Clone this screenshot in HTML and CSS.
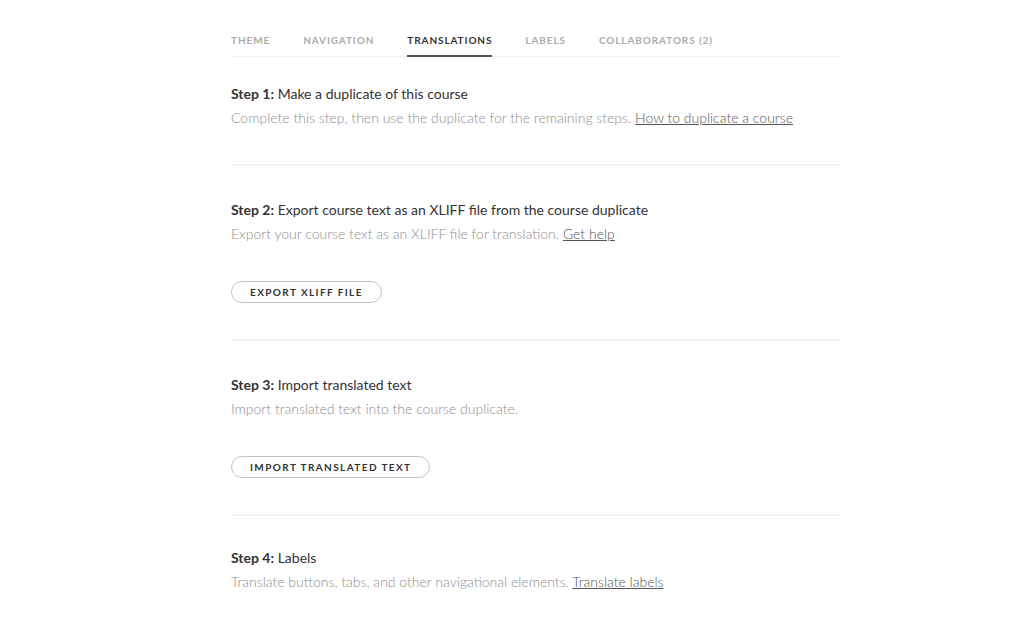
FILE: index.html
```html
<!DOCTYPE html>
<html>
<head>
    <meta charset="utf-8">
    <title>Translations</title>
    <link rel="stylesheet" href="styles.css">
</head>
<body>
    <div class="page">
        <nav class="tabs">
            <a class="tab">Theme</a>
            <a class="tab">Navigation</a>
            <a class="tab active">Translations</a>
            <a class="tab">Labels</a>
            <a class="tab">Collaborators (2)</a>
        </nav>

        <div class="step first">
            <h3><b>Step 1:</b> Make a duplicate of this course</h3>
            <p>Complete this step, then use the duplicate for the remaining steps. <a href="#">How to duplicate a course</a></p>
        </div>

        <div class="step">
            <h3><b>Step 2:</b> Export course text as an XLIFF file from the course duplicate</h3>
            <p>Export your course text as an XLIFF file for translation. <a href="#">Get help</a></p>
            <button>Export XLIFF file</button>
        </div>

        <div class="step">
            <h3><b>Step 3:</b> Import translated text</h3>
            <p>Import translated text into the course duplicate.</p>
            <button>Import translated text</button>
        </div>

        <div class="step last">
            <h3><b>Step 4:</b> Labels</h3>
            <p>Translate buttons, tabs, and other navigational elements. <a href="#">Translate labels</a></p>
        </div>
    </div>
</body>
</html>
```

FILE: styles.css
```css
body {
    margin: 0;
    background: #fff;
    font-family: Lato, "Open Sans", sans-serif;
    color: #333;
}
.page {
    width: 609px;
    margin-left: 231px;
}
.tabs {
    display: flex;
    gap: 33px;
    padding-top: 33px;
    border-bottom: 1px solid #f0f0f0;
}
.tab {
    font-size: 10px;
    font-weight: 700;
    line-height: 14px;
    letter-spacing: 0.9px;
    text-transform: uppercase;
    color: #ababab;
    padding-bottom: 8px;
    border-bottom: 2px solid transparent;
    margin-bottom: -1px;
}
.tab.active {
    color: #333;
    border-bottom-color: #555;
}
.step {
    padding: 34px 0 36px;
    border-bottom: 2px solid #f4f4f4;
}
.step.first {
    padding-top: 27px;
}
.step.last {
    padding-top: 32px;
    border-bottom: none;
}
.step h3 {
    margin: 0 0 4px;
    font-size: 14px;
    font-weight: 400;
    line-height: 20px;
    color: #333;
}
.step h3 b {
    font-weight: 700;
}
.step p {
    margin: 0;
    font-size: 14px;
    font-weight: 300;
    line-height: 20px;
    color: #8e8e8e;
}
.step p a {
    color: #555;
    text-decoration: underline;
}
button {
    margin-top: 37px;
    height: 22px;
    padding: 0 18px;
    border: 1px solid #c4c4c4;
    border-radius: 11px;
    background: #fff;
    font-family: Lato, sans-serif;
    font-size: 10px;
    font-weight: 700;
    letter-spacing: 1.4px;
    text-transform: uppercase;
    color: #333;
}
```
